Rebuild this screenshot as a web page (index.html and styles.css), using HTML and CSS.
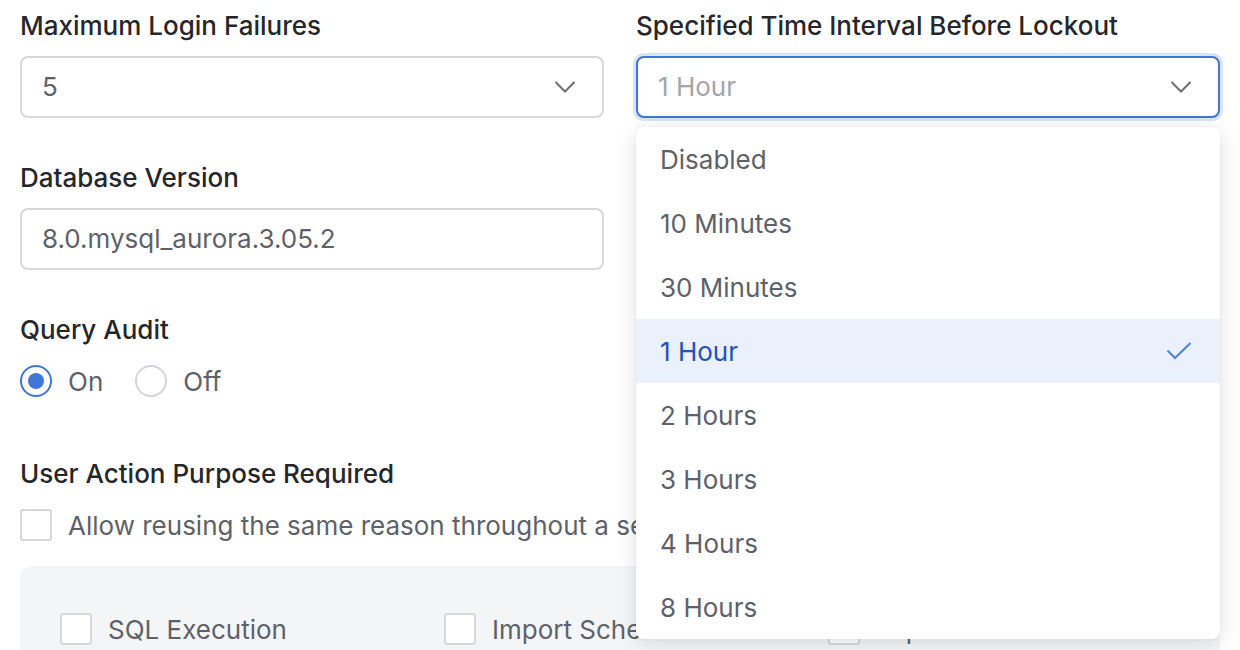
FILE: index.html
```html
<!DOCTYPE html>
<html lang="en">
<head>
<meta charset="utf-8">
<title>Settings</title>
<link rel="stylesheet" href="styles.css">
</head>
<body>
<div class="page">
  <div class="grid">
    <div class="col">
      <div class="field">
        <div class="label">Maximum Login Failures</div>
        <div class="select">
          <span class="value">5</span>
          <svg class="chev" width="22" height="14" viewBox="0 0 22 14"><path d="M1.5 2 L11 11.5 L20.5 2" fill="none" stroke="#6b6e74" stroke-width="2"/></svg>
        </div>
      </div>
      <div class="field">
        <div class="label">Database Version</div>
        <div class="input"><span class="value">8.0.mysql_aurora.3.05.2</span></div>
      </div>
      <div class="field">
        <div class="label">Query Audit</div>
        <div class="radios">
          <label class="radio"><span class="dot on"></span><span class="rtext">On</span></label>
          <label class="radio"><span class="dot"></span><span class="rtext">Off</span></label>
        </div>
      </div>
    </div>
    <div class="col">
      <div class="field">
        <div class="label">Specified Time Interval Before Lockout</div>
        <div class="select-wrap">
          <div class="select focus">
            <span class="value placeholder">1 Hour</span>
            <svg class="chev" width="22" height="14" viewBox="0 0 22 14"><path d="M1.5 2 L11 11.5 L20.5 2" fill="none" stroke="#6b6e74" stroke-width="2"/></svg>
          </div>
          <ul class="menu">
            <li class="opt">Disabled</li>
            <li class="opt">10 Minutes</li>
            <li class="opt">30 Minutes</li>
            <li class="opt selected">1 Hour
              <svg width="26" height="18" viewBox="0 0 26 18"><path d="M1.5 8.5 L9 16 L24.5 1" fill="none" stroke="#4f7fe0" stroke-width="2"/></svg>
            </li>
            <li class="opt">2 Hours</li>
            <li class="opt">3 Hours</li>
            <li class="opt">4 Hours</li>
            <li class="opt">8 Hours</li>
          </ul>
        </div>
      </div>
    </div>
  </div>

  <div class="section">
    <div class="label">User Action Purpose Required</div>
    <label class="check"><span class="box"></span><span class="ctext">Allow reusing the same reason throughout a session</span></label>
    <div class="panel">
      <label class="check"><span class="box"></span><span class="ctext">SQL Execution</span></label>
      <label class="check"><span class="box"></span><span class="ctext">Import Schema</span></label>
      <label class="check"><span class="box"></span><span class="ctext">Export Data</span></label>
    </div>
  </div>
</div>
</body>
</html>
```

FILE: styles.css
```css
* { box-sizing: border-box; }
html, body { margin: 0; padding: 0; background: #ffffff; }
body {
  font-family: Inter, "Noto Sans", sans-serif;
  font-size: 26px;
  color: #5e6268;
  overflow: hidden;
  height: 650px;
}
.page { padding: 10px 20px 0 20px; width: 1240px; }
.grid {
  display: grid;
  grid-template-columns: 584px 584px;
  column-gap: 32px;
}
.col { display: flex; flex-direction: column; gap: 44px; }
.field { display: flex; flex-direction: column; }
.label {
  font-weight: 500;
  color: #25272b;
  line-height: 32px;
  margin-bottom: 14px;
}
.select, .input {
  height: 62px;
  border: 2px solid #d6d8dc;
  border-radius: 8px;
  display: flex;
  align-items: center;
  justify-content: space-between;
  padding: 0 26px 0 20px;
  background: #fff;
}
.value { color: #5e6268; line-height: 32px; }
.placeholder { color: #a3a6ac; }
.select.focus {
  border-color: #3f76d9;
  box-shadow: 0 0 0 3px rgba(63, 118, 217, 0.2);
}
.select-wrap { position: relative; }
.menu {
  position: absolute;
  top: 71px;
  left: 0;
  right: 0;
  margin: 0;
  padding: 0;
  list-style: none;
  background: #fff;
  border-radius: 8px;
  box-shadow: 0 4px 22px rgba(0, 0, 0, 0.12), 0 0 4px rgba(0, 0, 0, 0.04);
  z-index: 10;
  overflow: hidden;
}
.opt {
  height: 64px;
  display: flex;
  align-items: center;
  justify-content: space-between;
  padding: 0 28px 0 24px;
  color: #5e6268;
}
.opt.selected { background: #eaf0fc; color: #2352bd; }
.radios { display: flex; align-items: center; gap: 32px; height: 42px; }
.radio { display: flex; align-items: center; gap: 16px; }
.dot {
  width: 32px; height: 32px;
  border-radius: 50%;
  border: 2px solid #d3d5d9;
  display: flex; align-items: center; justify-content: center;
}
.dot.on { border-color: #3f76d9; }
.dot.on::after {
  content: "";
  width: 16px; height: 16px; border-radius: 50%;
  background: #3f76d9;
}
.rtext { color: #5e6268; }
.section { margin-top: 56px; }
.section > .label { margin-bottom: 17px; }
.check { display: flex; align-items: center; gap: 16px; height: 36px; }
.box {
  width: 32px; height: 32px;
  border: 2px solid #d6d8dc;
  border-radius: 3px;
  background: #fff;
  flex: none;
}
.ctext { color: #5e6268; white-space: nowrap; }
.panel {
  margin-top: 23px;
  background: #f4f5f7;
  border-radius: 12px;
  padding: 45px 40px 30px;
  display: grid;
  grid-template-columns: 384px 384px 384px;
}
```
